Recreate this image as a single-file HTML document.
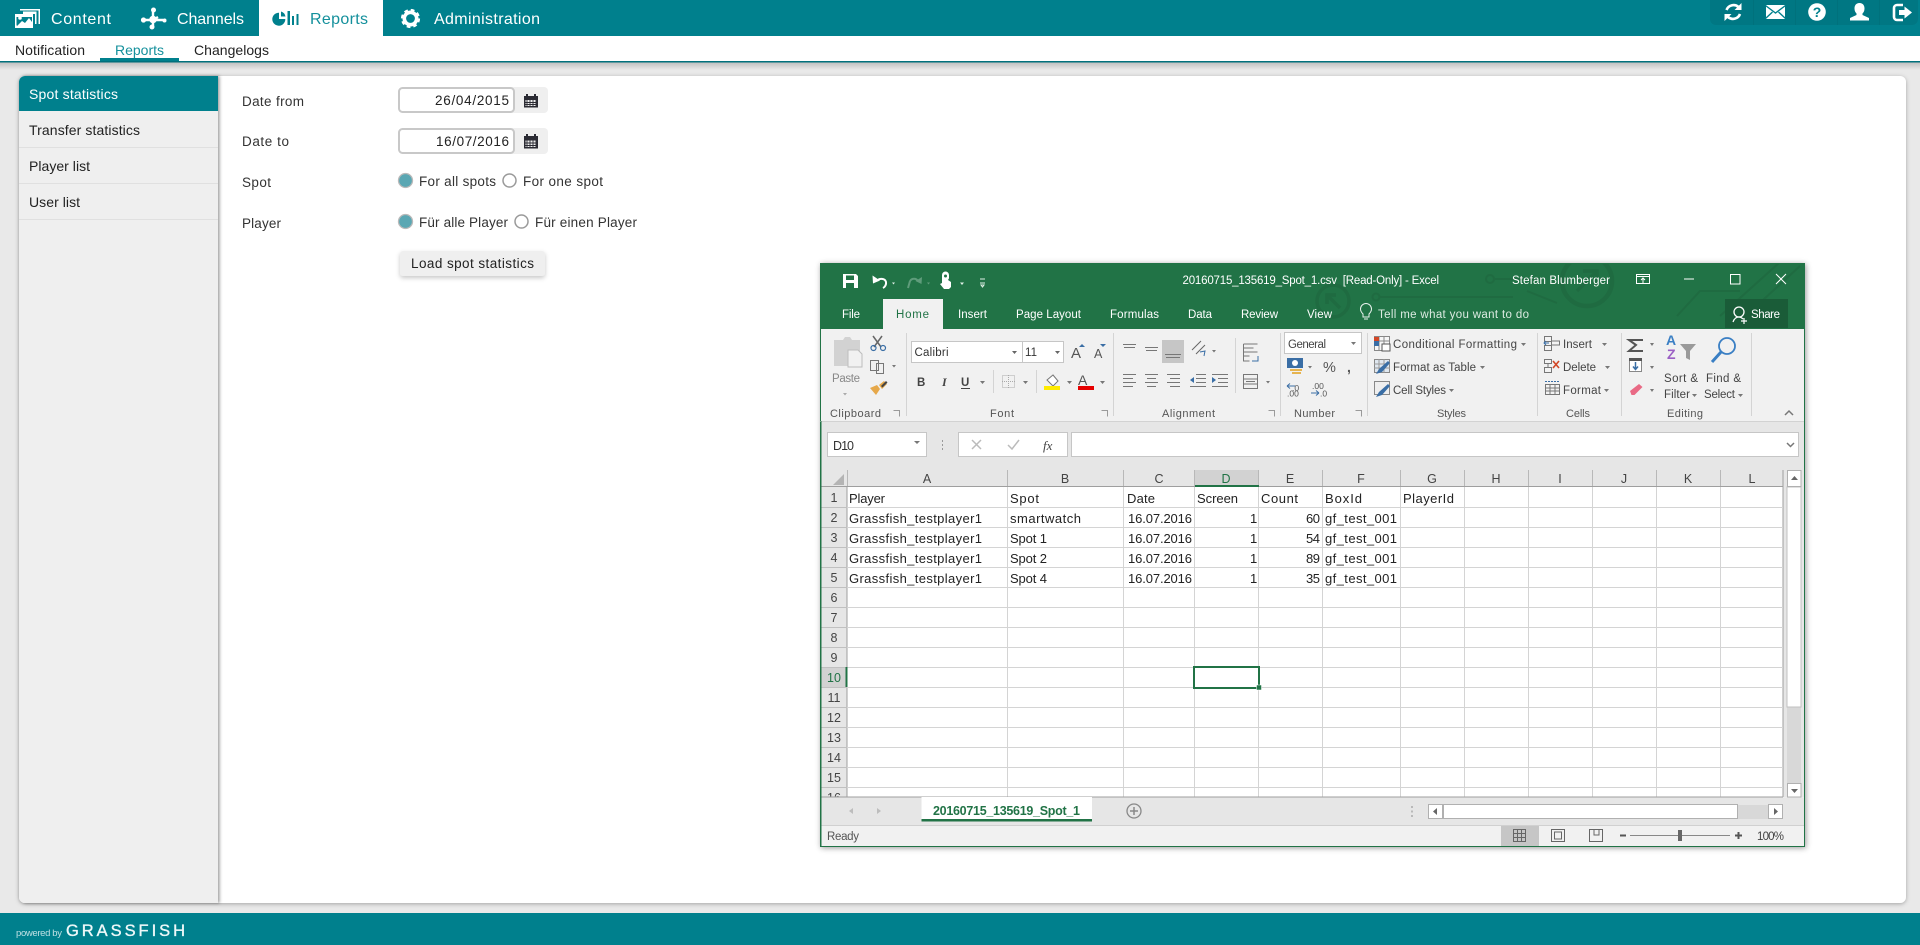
<!DOCTYPE html>
<html lang="en"><head><meta charset="utf-8"><title>Reports</title>
<style>
html,body{margin:0;padding:0;width:1920px;height:945px;overflow:hidden;background:#e9e9e9}
svg{display:block}
text{font-family:"Liberation Sans",Arial,sans-serif;white-space:pre}
.n{font-size:16px;fill:#fff}
.s{font-size:14px;fill:#222}
.f{font-size:13.5px;fill:#333}
.x{font-size:12px;fill:#444}
.t{font-size:11.5px;fill:#fff}
.g{font-size:11px;fill:#555}
.c{font-size:13px;fill:#222}
.h{font-size:12.5px;fill:#444;text-anchor:middle}
.r{font-size:12.5px;fill:#444;text-anchor:middle}
</style></head><body>
<svg width="1920" height="945" viewBox="0 0 1920 945" xmlns="http://www.w3.org/2000/svg">
<defs>
<filter id="sh" x="-5%" y="-5%" width="110%" height="110%"><feDropShadow dx="0" dy="1" stdDeviation="2" flood-color="#000" flood-opacity=".3"/></filter>
<filter id="btn" x="-10%" y="-30%" width="120%" height="170%"><feDropShadow dx="0" dy="2" stdDeviation="2.500" flood-color="#000" flood-opacity=".22"/></filter>
<filter id="shw" x="-3%" y="-3%" width="106%" height="106%"><feDropShadow dx="1" dy="1" stdDeviation="3" flood-color="#000" flood-opacity=".4"/></filter>
<filter id="sb" x="-5%" y="-2%" width="110%" height="104%"><feDropShadow dx="1.500" dy="0" stdDeviation="1.500" flood-color="#000" flood-opacity=".4"/></filter>
<linearGradient id="top" x1="0" y1="0" x2="0" y2="1"><stop offset="0" stop-color="#bdbdbd"/><stop offset="1" stop-color="#e9e9e9"/></linearGradient>
<clipPath id="tb"><rect x="820" y="263" width="985" height="66"/></clipPath>
</defs>

<rect width="1920" height="945" fill="#e9e9e9"/>
<rect x="0" y="62" width="1920" height="8" fill="url(#top)"/>

<!-- main panel -->
<rect x="19" y="76" width="1887" height="827" rx="6" fill="#fff" filter="url(#sh)"/>
<path d="M218 76H25a6 6 0 0 0-6 6V897a6 6 0 0 0 6 6H218Z" fill="#efefef" filter="url(#sb)"/>
<path d="M218 76H25a6 6 0 0 0-6 6V111H218Z" fill="#00808d"/>
<path d="M19 147.500H218M19 183.500H218M19 219.500H218" stroke="#e0e0e0"/>
<text x="29" y="99" class="s" style="fill:#fff" textLength="89">Spot statistics</text>
<text x="29" y="135" class="s" textLength="111">Transfer statistics</text>
<text x="29" y="171" class="s" textLength="61">Player list</text>
<text x="29" y="207" class="s" textLength="51">User list</text>

<!-- top nav -->
<rect width="1920" height="36" fill="#00808d"/>
<rect x="259" y="0" width="124" height="36" fill="#fff"/>
<rect x="0" y="36" width="1920" height="25" fill="#fff"/>
<rect x="0" y="61" width="1920" height="1.500" fill="#00707c"/>
<rect x="100" y="58" width="79" height="3" fill="#00808d"/>
<!-- content icon -->
<path d="M20 11.500V9h20v15h-1.500V10.500H20ZM23 14v-2.500h13.500V24H35V14Z" fill="#fff"/>
<path d="M15 14h18v14H15Z" fill="#fff"/>
<path d="M17 26l5-5 3 2 4-5 3 4v-5H16.500v8Z" fill="#00808d"/><circle cx="20" cy="18" r="1.800" fill="#fff"/>
<text x="51" y="24" class="n" textLength="60">Content</text>
<!-- channels icon -->
<path d="M153 11V27M145 20H163M153 20l5 -3" stroke="#fff" stroke-width="2.400" fill="none"/>
<circle cx="153" cy="19.500" r="3.800" fill="#fff"/><circle cx="153.500" cy="10" r="2.500" fill="#fff"/><circle cx="143.500" cy="20" r="2.600" fill="#fff"/><circle cx="164.500" cy="20.500" r="2" fill="#fff"/><circle cx="152" cy="27" r="2.500" fill="#fff"/>
<text x="177" y="24" class="n" textLength="67">Channels</text>
<!-- reports icon -->
<path d="M279 12.200v6.300h6.300a6.500 6.500 0 1 1-6.300-6.300Z" fill="#00808d" transform="translate(0 .5)"/><path d="M281 11.500a6.500 6.500 0 0 1 4.500 5H281Z" fill="#00808d"/>
<rect x="287.500" y="11" width="2.500" height="14" fill="#00808d"/><rect x="292" y="16" width="2" height="9" fill="#00808d"/><rect x="296.500" y="14" width="2" height="11" fill="#00808d"/>
<text x="310" y="24" class="n" style="fill:#14909c" textLength="58">Reports</text>
<!-- gear -->
<circle cx="410.500" cy="18.500" r="6.200" fill="none" stroke="#fff" stroke-width="3.600"/><circle cx="410.500" cy="18.500" r="8.200" fill="none" stroke="#fff" stroke-width="2.800" stroke-dasharray="3.600 2.840"/>
<text x="434" y="24" class="n" textLength="106">Administration</text>

<text x="15" y="55" class="s" textLength="70">Notification</text>
<text x="115" y="55" class="s" style="fill:#14909c" textLength="49">Reports</text>
<text x="194" y="55" class="s" textLength="75">Changelogs</text>

<!-- top right buttons -->
<path d="M1710 0H1918V19a6 6 0 0 1-6 6H1716a6 6 0 0 1-6-6Z" fill="#007783"/>
<path d="M1753.500 0V25M1795.500 0V25M1837.500 0V25M1879.500 0V25" stroke="#00717c"/>
<path d="M1726.500 10a7.500 7.500 0 0 1 12-3M1740 14a7.500 7.500 0 0 1-12 3" fill="none" stroke="#fff" stroke-width="2.600"/>
<path d="M1741.500 3v7h-7ZM1724.500 21v-7h7Z" fill="#fff"/>
<path d="M1766 5h19v14h-19Z" fill="#fff"/><path d="M1765.500 5.500l10 7.500 10-7.500M1765.500 18.500l7-6.500M1785.500 18.500l-7-6.500" fill="none" stroke="#00808d" stroke-width="1.400"/>
<circle cx="1817" cy="12" r="8.800" fill="#fff"/><text x="1817" y="17" font-size="14" font-weight="700" text-anchor="middle" fill="#00808d">?</text>
<path d="M1859.500 3c3.500 0 5 2.500 5 5.500 0 2.500-1 4-2 5v1.500l6.500 3v2.500H1850v-2.500l6.500-3V13.500c-1-1-2-2.500-2-5 0-3 1.500-5.500 5-5.500Z" fill="#fff"/>
<path d="M1903 5h-6a3 3 0 0 0-3 3v9a3 3 0 0 0 3 3h6" fill="none" stroke="#fff" stroke-width="2.600"/><path d="M1899 10h5.500V6.500l7.500 6-7.500 6V15H1899Z" fill="#fff"/>

<!-- form -->
<text x="242" y="106" class="f" textLength="62">Date from</text>
<text x="242" y="146" class="f" textLength="47">Date to</text>
<text x="242" y="187" class="f" textLength="29">Spot</text>
<text x="242" y="228" class="f" textLength="39">Player</text>
<path d="M510 87h34a4 4 0 0 1 4 4v18a4 4 0 0 1-4 4h-34Z" fill="#efefef"/>
<path d="M510 128h34a4 4 0 0 1 4 4v18a4 4 0 0 1-4 4h-34Z" fill="#efefef"/>
<rect x="399" y="88" width="115" height="24" rx="3.500" fill="#fff" stroke="#c8c8c8" stroke-width="2"/>
<rect x="399" y="129" width="115" height="24" rx="3.500" fill="#fff" stroke="#c8c8c8" stroke-width="2"/>
<text x="435" y="105" class="f" style="fill:#222" textLength="74">26/04/2015</text>
<text x="436" y="146" class="f" style="fill:#222" textLength="73">16/07/2016</text>
<g><path d="M524 96h14v11.500h-14Z" fill="#2b2b33"/><rect x="526" y="94" width="2" height="4" fill="#2b2b33"/><rect x="534" y="94" width="2" height="4" fill="#2b2b33"/><path d="M525.500 100h11v6h-11Z" fill="#efefef"/><path d="M527 100v6M530 100v6M533 100v6M536 100v6M525.500 102.500h11M525.500 104.500h11" stroke="#2b2b33" stroke-width=".9"/></g>
<g transform="translate(0 41)"><path d="M524 95h14v12.500h-14Z" fill="#2b2b33"/><rect x="526" y="93" width="2" height="4" fill="#2b2b33"/><rect x="534" y="93" width="2" height="4" fill="#2b2b33"/><path d="M525.500 99.500h11v6.500h-11Z" fill="#efefef"/><path d="M527 99.500v6.500M530 99.500v6.500M533 99.500v6.500M536 99.500v6.500M525.500 102h11M525.500 104.500h11" stroke="#2b2b33" stroke-width=".9"/></g>
<circle cx="405.500" cy="180.500" r="7" fill="#5aa7b3" stroke="#b9b9b9" stroke-width="1.300"/>
<circle cx="509.500" cy="180.500" r="6.500" fill="#fff" stroke="#9a9a9a" stroke-width="1.500"/>
<circle cx="405.500" cy="221.500" r="7" fill="#5aa7b3" stroke="#b9b9b9" stroke-width="1.300"/>
<circle cx="521.500" cy="221.500" r="6.500" fill="#fff" stroke="#9a9a9a" stroke-width="1.500"/>
<text x="419" y="186" class="f" textLength="77">For all spots</text>
<text x="523" y="186" class="f" textLength="80">For one spot</text>
<text x="419" y="227" class="f" textLength="89">Für alle Player</text>
<text x="535" y="227" class="f" textLength="102">Für einen Player</text>
<rect x="400" y="251" width="145" height="25" rx="3" fill="#efefef" filter="url(#btn)"/>
<text x="411" y="268" class="f" style="fill:#222" textLength="123">Load spot statistics</text>

<!-- footer -->
<rect y="913" width="1920" height="32" fill="#00808d"/>
<text x="16" y="936" font-size="9.500" fill="#bfe0e4" textLength="46">powered by</text>
<text x="66" y="936" font-size="16.500" fill="#eef8f9" stroke="#eef8f9" stroke-width=".35" textLength="119">GRASSFISH</text>

<!-- ================= EXCEL ================= -->
<rect x="820" y="263" width="985" height="584" fill="#f1f1f1" filter="url(#shw)"/>
<rect x="820" y="263" width="985" height="66" fill="#217346"/>
<g fill="none" stroke="#1f6b41" stroke-width="2" clip-path="url(#tb)">
<circle cx="1333" cy="301" r="16" stroke-width="3.500"/><path d="M1340 308l-13-13M1327 304v-9h9" stroke-width="3.500"/>
<circle cx="1587" cy="281" r="25" stroke-width="4.500"/><path d="M1577 291l20-20M1583 271h14v14" stroke-width="3.500"/>
<path d="M1380 297h133M1495 279h45M1527 291l30 12M1677 316l23-25h40M1763 300l37-34M1720 316l60-54"/>
<circle cx="1490" cy="279" r="4"/><circle cx="1376" cy="297" r="3.500"/>
</g>
<rect x="820.500" y="263.500" width="984" height="583" fill="none" stroke="#217346"/>
<!-- QAT -->
<path d="M843 274h13l2 2v12h-15Z" fill="#fff"/><rect x="846" y="275.500" width="8" height="4.500" fill="#217346"/><rect x="846" y="283" width="8" height="5" fill="#217346"/>
<path d="M877 281c2-3 8-3 9 1 .5 2.500-1 5-3 6" fill="none" stroke="#fff" stroke-width="2"/><path d="M872.500 275.500l.5 8 7-3Z" fill="#fff"/>
<path d="M892 282.500h3l-1.500 2Z" fill="#e0efe6"/>
<path d="M918 281c-2-3-6-3-8 0M908 288l2-7" fill="none" stroke="#5f9c7b" stroke-width="2"/><path d="M922 277l-.5 7-6-3Z" fill="#5f9c7b"/>
<path d="M927 282.500h3l-1.500 2Z" fill="#5f9c7b"/>
<path d="M942 275a3.500 3.500 0 0 1 7 0v3c0 1-1 1.500-1 2l3 2v5l-2 2h-5l-4-5 2-1Z" fill="#fff"/><circle cx="945.500" cy="276" r="1.500" fill="#217346"/>
<path d="M960 282.500h4l-2 2.500Z" fill="#e0efe6"/>
<path d="M980 279h5M980 283h5M981 285h3l-1.500 2Z" stroke="#e0efe6" fill="none" stroke-width="1"/>
<text x="1182.500" y="284" class="t" textLength="256.500">20160715_135619_Spot_1.csv  [Read-Only] - Excel</text>
<text x="1512" y="284" class="t" textLength="98">Stefan Blumberger</text>
<rect x="1636.500" y="274.500" width="13" height="9" fill="none" stroke="#fff"/><path d="M1636.500 276.500h13M1643 283v-5M1641 280l2-2 2 2" stroke="#fff" fill="none"/>
<rect x="1684" y="278.500" width="10" height="1" fill="#fff"/>
<rect x="1730.500" y="274.500" width="9.500" height="9.500" fill="none" stroke="#fff"/>
<path d="M1776 274l10 10M1786 274l-10 10" stroke="#fff" fill="none"/>
<!-- tabs -->
<rect x="883" y="299" width="60" height="30" fill="#f1f1f1"/>
<text x="842" y="318" class="t" textLength="18">File</text>
<text x="896" y="318" style="fill:#217346;font-size:11.500px" textLength="33">Home</text>
<text x="958" y="318" class="t" textLength="29">Insert</text>
<text x="1016" y="318" class="t" textLength="65">Page Layout</text>
<text x="1110" y="318" class="t" textLength="49">Formulas</text>
<text x="1188" y="318" class="t" textLength="24">Data</text>
<text x="1241" y="318" class="t" textLength="37">Review</text>
<text x="1307" y="318" class="t" textLength="25">View</text>
<text x="1378" y="318" style="fill:#dcebe2;font-size:11.500px" textLength="151">Tell me what you want to do</text>
<path d="M1363 314c-1.500-1.500-2.500-3-2.500-5a5.500 5.500 0 0 1 11 0c0 2-1 3.500-2.500 5v3h-6ZM1364 319h4" fill="none" stroke="#eaf3ee"/>
<rect x="1725" y="299" width="63" height="29" fill="#1a5c38"/>
<circle cx="1739" cy="312" r="5" fill="none" stroke="#fff" stroke-width="1.300"/><path d="M1733 322c1-3 3-5 6-5 2 0 3 1 4 2M1744 318v6M1741 321h6" fill="none" stroke="#fff" stroke-width="1.200"/>
<text x="1751" y="318" class="t" textLength="29">Share</text>

<!-- ribbon dividers -->
<path d="M906.500 333V416M1113.500 333V416M1280.500 333V416M1367.500 333V416M1537.500 333V416M1621.500 333V416M1751.500 333V416M993.500 370V393M1036.500 370V393M1235.500 338V393" stroke="#d4d4d4"/>
<path d="M820 421.500H1805" stroke="#d2d2d2"/>
<!-- ribbon labels -->
<text x="830" y="417" class="g" textLength="51">Clipboard</text>
<text x="990" y="417" class="g" textLength="24">Font</text>
<text x="1162" y="417" class="g" textLength="53">Alignment</text>
<text x="1294" y="417" class="g" textLength="41">Number</text>
<text x="1437" y="417" class="g" textLength="29">Styles</text>
<text x="1566" y="417" class="g" textLength="24">Cells</text>
<text x="1667" y="417" class="g" textLength="36">Editing</text>
<path d="M893.500 410.500h6v6M1101.500 410.500h6v6M1268.500 410.500h6v6M1355.500 410.500h6v6" fill="none" stroke="#9a9a9a"/>
<path d="M1785 415l4-4 4 4" fill="none" stroke="#777" stroke-width="1.500"/>
<!-- clipboard -->
<path d="M834 340h9l2-3h5l2 3h8v26h-26Z" fill="#d2d2d2"/><path d="M848 350h10l4 4v13h-14Z" fill="#f1f1f1" stroke="#bdbdbd"/>
<text x="832" y="382" font-size="11.500" fill="#888" textLength="28">Paste</text>
<path d="M843 393h4l-2 2.500Z" fill="#aaa"/>
<path d="M873 336l8 11M882 336l-8 11" stroke="#666" stroke-width="1.500"/><circle cx="873.500" cy="348" r="2.500" fill="none" stroke="#3a6ea5" stroke-width="1.200"/><circle cx="883" cy="348" r="2.500" fill="none" stroke="#3a6ea5" stroke-width="1.200"/>
<path d="M870.500 360.500h8v10h-8ZM876.500 363.500h7v10h-7Z" fill="#f1f1f1" stroke="#777"/>
<path d="M892 365h4l-2 2.500Z" fill="#777"/>
<path d="M870 388l7-3 3 4-4 6ZM879 385l5-4 3 3-5 5Z" fill="#e6a84a"/><path d="M881 386l5-5 1.500 1.500-5 5Z" fill="#444"/>
<!-- font -->
<rect x="911.500" y="341.500" width="152" height="21" fill="#fff" stroke="#c6c6c6"/><path d="M1022.500 341v21" stroke="#c6c6c6"/>
<text x="914.500" y="356" class="x" style="font-size:11.500px;fill:#333" textLength="34">Calibri</text>
<text x="1025" y="356" class="x" style="font-size:11.500px;fill:#333" textLength="12">11</text>
<path d="M1012 351h5l-2.500 3ZM1055 351h5l-2.500 3Z" fill="#666"/>
<text x="1071" y="358" font-size="15" fill="#555" textLength="11">A</text><path d="M1079 347l3-3 3 3Z" fill="#3a6ea5"/>
<text x="1094" y="358" font-size="12.500" fill="#555" textLength="9">A</text><path d="M1100 344h6l-3 3Z" fill="#3a6ea5"/>
<text x="917" y="386" font-size="11.500" font-weight="700" fill="#444">B</text>
<text x="942" y="386" font-size="12" font-style="italic" font-weight="700" fill="#444" style="font-family:'Liberation Serif',serif">I</text>
<text x="961" y="386" font-size="11.500" font-weight="700" fill="#444">U</text><rect x="961" y="388" width="9" height="1" fill="#444"/>
<path d="M980 381h5l-2.500 3ZM1023 381h5l-2.500 3ZM1067 381h5l-2.500 3ZM1100 381h5l-2.500 3Z" fill="#777"/>
<rect x="1002.500" y="375.500" width="12" height="12" fill="none" stroke="#aaa" stroke-dasharray="1 1"/><path d="M1008.500 375v13M1002 381.500h13" stroke="#aaa" stroke-dasharray="1 1"/>
<path d="M1047 380l6-5 5 6-5 5Z" fill="#fff" stroke="#777"/>
<rect x="1044" y="386" width="16" height="4" fill="#ffeb00"/>
<text x="1078" y="385" font-size="14" fill="#555" textLength="16">A</text><rect x="1078" y="386" width="16" height="4" fill="#e60000"/>
<!-- alignment -->
<rect x="1162" y="340" width="22" height="23" fill="#c6c6c6"/>
<path d="M1123 344.500h13M1124 347.500h11M1145 347.500h13M1146 350.500h11M1165 354.500h16M1166 357.500h14" stroke="#777"/>
<path d="M1192 350l9-9M1196 354l9-9" stroke="#666"/><path d="M1200 352l5-1-1 5" fill="none" stroke="#3a6ea5"/>
<path d="M1212 350h4l-2 2.500Z" fill="#777"/>
<path d="M1243.500 344h14M1243.500 348h10M1243.500 352h14M1243.500 356h6M1243.500 344v17h6" fill="none" stroke="#777"/><path d="M1252 361h6v-5" fill="none" stroke="#3a6ea5"/>
<path d="M1123 374.500h13M1123 378.500h10M1123 382.500h13M1123 386.500h10M1145 374.500h13M1147 378.500h9M1145 382.500h13M1147 386.500h9M1167 374.500h13M1170 378.500h10M1167 382.500h13M1170 386.500h10M1196 374.500h10M1196 378.500h10M1196 382.500h10M1190 386.500h16M1212 374.500h16M1218 378.500h10M1218 382.500h10M1212 386.500h16" stroke="#777"/>
<path d="M1190 380l4-3v6ZM1216 380l-4-3v6Z" fill="#3a6ea5"/>
<rect x="1243.500" y="374.500" width="14" height="14" fill="none" stroke="#777"/><path d="M1243.500 379h14M1243.500 384h14M1246 381.500h9" stroke="#777"/>
<path d="M1266 381h4l-2 2.500Z" fill="#777"/>
<!-- number -->
<rect x="1284.500" y="332.500" width="77" height="21" fill="#fff" stroke="#c6c6c6"/>
<text x="1288" y="348" class="x" style="font-size:11.500px;fill:#444" textLength="38">General</text>
<path d="M1351 342h5l-2.500 3Z" fill="#777"/>
<rect x="1287" y="358" width="16" height="10" fill="#3a6ea5"/><path d="M1290 370h12M1292 373h9" stroke="#e6b450" stroke-width="2"/><circle cx="1295" cy="363" r="3" fill="#fff"/>
<path d="M1308 366h4l-2 2.500Z" fill="#777"/>
<text x="1323" y="372" font-size="14.500" fill="#555" textLength="13">%</text>
<text x="1347" y="372" font-size="14" font-weight="700" fill="#555">,</text>
<path d="M1287 386h8M1287 386l3-2.500M1287 386l3 2.500M1311 393h8M1319 393l-3-2.500M1319 393l-3 2.500" stroke="#3a6ea5" fill="none"/>
<text x="1292" y="391" font-size="8.500" fill="#555">.0</text><text x="1287" y="396.500" font-size="8.500" fill="#555">.00</text>
<text x="1312" y="389" font-size="8.500" fill="#555">.00</text><text x="1320" y="396.500" font-size="8.500" fill="#555">.0</text>
<!-- styles -->
<g font-size="11.500" fill="#444">
<text x="1393" y="348" textLength="124">Conditional Formatting</text>
<text x="1393" y="371" textLength="83">Format as Table</text>
<text x="1393" y="394" textLength="53">Cell Styles</text>
<text x="1563" y="348" textLength="29">Insert</text>
<text x="1563" y="371" textLength="33">Delete</text>
<text x="1563" y="394" textLength="38">Format</text>
<text x="1664" y="382" textLength="34">Sort &amp;</text>
<text x="1664" y="398" textLength="26">Filter</text>
<text x="1706" y="382" textLength="35">Find &amp;</text>
<text x="1704" y="398" textLength="31">Select</text>
</g>
<path d="M1521 343h5l-2.500 3ZM1480 366h5l-2.500 3ZM1449 389h5l-2.500 3ZM1602 343h5l-2.500 3ZM1605 366h5l-2.500 3ZM1604 389h5l-2.500 3ZM1692 394h5l-2.500 3ZM1738 394h5l-2.500 3ZM1650 343h4l-2 3ZM1650 366h4l-2 3ZM1650 389h4l-2 3Z" fill="#777"/>
<rect x="1374.500" y="336.500" width="15" height="14" fill="#f7f7f7" stroke="#888"/><path d="M1374 341h16M1379 336v14M1384 336v14" stroke="#888"/><rect x="1374" y="337" width="5" height="4" fill="#d24726"/><rect x="1374" y="341" width="5" height="5" fill="#3a6ea5"/><rect x="1382" y="344" width="8" height="7" fill="#fff" stroke="#555"/>
<rect x="1374.500" y="359.500" width="15" height="13" fill="#dfe7ef" stroke="#888"/><path d="M1374 364h16M1374 368h16M1379 359v14M1384 359v14" stroke="#999"/><path d="M1376 374l6-2 8-9-2-2-9 8Z" fill="#3a6ea5"/>
<rect x="1374.500" y="381.500" width="15" height="13" fill="#eee" stroke="#888"/><path d="M1376 397l6-2 8-9-2-2-9 8Z" fill="#3a6ea5"/>
<!-- cells -->
<path d="M1544.500 336.500h7v5h-7ZM1544.500 345.500h7v5h-7ZM1551.500 341h8v4h-8Z" fill="#f3f3f3" stroke="#777"/><path d="M1544 343h5M1546 341l-2 2 2 2" stroke="#3a6ea5" fill="none"/>
<path d="M1544.500 359.500h7v4h-7ZM1544.500 367.500h7v5h-7ZM1548 363.500v4" fill="#f3f3f3" stroke="#777"/><path d="M1553 361l6 7M1559 361l-6 7" stroke="#d24726" stroke-width="1.600"/>
<rect x="1545.500" y="384.500" width="14" height="10" fill="#f3f3f3" stroke="#777"/><path d="M1545 388h15M1545 391h15M1550 384v11M1555 384v11" stroke="#777"/><path d="M1545 381.500h15" stroke="#3a6ea5" stroke-dasharray="2 1"/>
<!-- editing -->
<path d="M1643 340h-14l7 5-7 6h14" fill="none" stroke="#555" stroke-width="2"/>
<rect x="1629.500" y="359.500" width="12" height="12" fill="#fff" stroke="#888"/><rect x="1629" y="358" width="13" height="3" fill="#555"/><path d="M1635.500 362v7M1633 366.500l2.500 3 2.500-3" stroke="#3a6ea5" fill="none" stroke-width="1.500"/>
<path d="M1630 391l9-7 3.500 3-8 8h-3Z" fill="#e96a85"/>
<text x="1666" y="345" font-size="14" font-weight="700" fill="#3a7fc4">A</text><text x="1667" y="359" font-size="14" font-weight="700" fill="#9a5fc4">Z</text>
<path d="M1680 344h16l-6 7v9l-4-2v-7Z" fill="#9a9a9a"/>
<circle cx="1727" cy="346" r="8" fill="none" stroke="#3a7fc4" stroke-width="1.800"/><path d="M1721 352l-9 10" stroke="#3a7fc4" stroke-width="3"/>

<!-- formula bar -->
<rect x="821" y="422" width="983" height="48" fill="#e6e6e6"/>
<rect x="827.500" y="432.500" width="99" height="24" fill="#fff" stroke="#c6c6c6"/>
<text x="833" y="450" class="x" style="font-size:12.500px;fill:#333" textLength="21">D10</text>
<path d="M914 441h6l-3 3Z" fill="#777"/>
<path d="M942.500 440v2M942.500 444v2M942.500 448v2" stroke="#999"/>
<rect x="958.500" y="432.500" width="109" height="24" fill="#fff" stroke="#c6c6c6"/>
<path d="M972 440l9 9M981 440l-9 9" stroke="#bbb" stroke-width="1.500"/><path d="M1008 445l4 4 7-9" fill="none" stroke="#bbb" stroke-width="1.500"/>
<text x="1043" y="450" font-size="13" font-style="italic" style="font-family:'Liberation Serif',serif;fill:#444">fx</text>
<rect x="1071.500" y="432.500" width="727" height="24" fill="#fff" stroke="#c6c6c6"/>
<path d="M1787 443l3.500 3.500 3.500-3.500" fill="none" stroke="#777" stroke-width="1.500"/>

<!-- sheet -->
<rect x="821" y="470" width="983" height="327" fill="#e6e6e6"/>
<rect x="847" y="487" width="936" height="310" fill="#fff"/>
<path d="M833 485l11 0 0-11Z" fill="#b4b4b4"/>
<rect x="1195" y="470" width="64" height="17" fill="#d2d2d2"/>
<rect x="821" y="667" width="26" height="20" fill="#d2d2d2"/>
<!-- header dividers -->
<path d="M847.500 470V487M1007.500 470V487M1123.500 470V487M1194.500 470V487M1258.500 470V487M1322.500 470V487M1400.500 470V487M1464.500 470V487M1528.500 470V487M1592.500 470V487M1656.500 470V487M1720.500 470V487" stroke="#b8b8b8"/>
<path d="M821 486.500H1783M847 487V797M1783 470V797" stroke="#9f9f9f" fill="none"/>
<!-- grid -->
<path d="M847 507.500H1783M847 527.500H1783M847 547.500H1783M847 567.500H1783M847 587.500H1783M847 607.500H1783M847 627.500H1783M847 647.500H1783M847 667.500H1783M847 687.500H1783M847 707.500H1783M847 727.500H1783M847 747.500H1783M847 767.500H1783M847 787.500H1783M1007.500 487V797M1123.500 487V797M1194.500 487V797M1258.500 487V797M1322.500 487V797M1400.500 487V797M1464.500 487V797M1528.500 487V797M1592.500 487V797M1656.500 487V797M1720.500 487V797" stroke="#d4d4d4" fill="none"/>
<path d="M821 507.500H847M821 527.500H847M821 547.500H847M821 567.500H847M821 587.500H847M821 607.500H847M821 627.500H847M821 647.500H847M821 667.500H847M821 687.500H847M821 707.500H847M821 727.500H847M821 747.500H847M821 767.500H847M821 787.500H847" stroke="#c0c0c0"/>
<rect x="1195" y="485" width="64" height="2" fill="#217346"/>
<rect x="845.500" y="667" width="2" height="20" fill="#217346"/>
<!-- col heads -->
<text x="927" y="483" class="h">A</text><text x="1065" y="483" class="h">B</text><text x="1159" y="483" class="h">C</text><text x="1226" y="483" class="h" style="fill:#217346">D</text><text x="1290" y="483" class="h">E</text><text x="1361" y="483" class="h">F</text><text x="1432" y="483" class="h">G</text><text x="1496" y="483" class="h">H</text><text x="1560" y="483" class="h">I</text><text x="1624" y="483" class="h">J</text><text x="1688" y="483" class="h">K</text><text x="1752" y="483" class="h">L</text>
<text x="834" y="502" class="r">1</text><text x="834" y="522" class="r">2</text><text x="834" y="542" class="r">3</text><text x="834" y="562" class="r">4</text><text x="834" y="582" class="r">5</text><text x="834" y="602" class="r">6</text><text x="834" y="622" class="r">7</text><text x="834" y="642" class="r">8</text><text x="834" y="662" class="r">9</text><text x="834" y="682" class="r" style="fill:#217346">10</text><text x="834" y="702" class="r">11</text><text x="834" y="722" class="r">12</text><text x="834" y="742" class="r">13</text><text x="834" y="762" class="r">14</text><text x="834" y="782" class="r">15</text><text x="834" y="802" class="r">16</text>
<!-- cells -->
<text x="849" y="503" class="c" textLength="36">Player</text>
<text x="1010" y="503" class="c" textLength="29">Spot</text>
<text x="1127" y="503" class="c" textLength="28">Date</text>
<text x="1197" y="503" class="c" textLength="41">Screen</text>
<text x="1261" y="503" class="c" textLength="37">Count</text>
<text x="1325" y="503" class="c" textLength="37">BoxId</text>
<text x="1403" y="503" class="c" textLength="51">PlayerId</text>
<text x="849" y="523" class="c" textLength="133">Grassfish_testplayer1</text>
<text x="849" y="543" class="c" textLength="133">Grassfish_testplayer1</text>
<text x="849" y="563" class="c" textLength="133">Grassfish_testplayer1</text>
<text x="849" y="583" class="c" textLength="133">Grassfish_testplayer1</text>
<text x="1010" y="523" class="c" textLength="71">smartwatch</text>
<text x="1010" y="543" class="c" textLength="37">Spot 1</text>
<text x="1010" y="563" class="c" textLength="37">Spot 2</text>
<text x="1010" y="583" class="c" textLength="37">Spot 4</text>
<text x="1128" y="523" class="c" textLength="64">16.07.2016</text>
<text x="1128" y="543" class="c" textLength="64">16.07.2016</text>
<text x="1128" y="563" class="c" textLength="64">16.07.2016</text>
<text x="1128" y="583" class="c" textLength="64">16.07.2016</text>
<text x="1250" y="523" class="c">1</text><text x="1250" y="543" class="c">1</text><text x="1250" y="563" class="c">1</text><text x="1250" y="583" class="c">1</text>
<text x="1306" y="523" class="c" textLength="14">60</text><text x="1306" y="543" class="c" textLength="14">54</text><text x="1306" y="563" class="c" textLength="14">89</text><text x="1306" y="583" class="c" textLength="14">35</text>
<text x="1325" y="523" class="c" textLength="72">gf_test_001</text>
<text x="1325" y="543" class="c" textLength="72">gf_test_001</text>
<text x="1325" y="563" class="c" textLength="72">gf_test_001</text>
<text x="1325" y="583" class="c" textLength="72">gf_test_001</text>
<!-- selection -->
<rect x="1194" y="667" width="65" height="21" fill="none" stroke="#217346" stroke-width="2"/>
<rect x="1256.500" y="685" width="5" height="5" fill="#217346" stroke="#fff" stroke-width=".5"/>
<!-- v scrollbar -->
<rect x="1787" y="470" width="14" height="327" fill="#d8d8d8"/>
<rect x="1787" y="487" width="14" height="220" fill="#fff" stroke="#c0c0c0"/>
<rect x="1787.500" y="470.500" width="13.500" height="16" fill="#fff" stroke="#b0b0b0"/>
<rect x="1787.500" y="783.500" width="13.500" height="13.500" fill="#fff" stroke="#b0b0b0"/>
<path d="M1791 480l3.500-4 3.500 4ZM1791 789h7l-3.500 4Z" fill="#666"/>
<!-- tab bar -->
<rect x="821" y="797.500" width="983" height="27.500" fill="#e6e6e6"/>
<rect x="821" y="796.500" width="962" height="1" fill="#9f9f9f"/>
<rect x="921.500" y="797" width="170.500" height="22" fill="#fff"/>
<rect x="921.500" y="819" width="170.500" height="2.500" fill="#217346"/>
<text x="933" y="815" font-size="12.500" font-weight="700" fill="#217346" textLength="147">20160715_135619_Spot_1</text>
<path d="M853 808v6l-4-3ZM877 808v6l4-3Z" fill="#bdbdbd"/>
<circle cx="1134" cy="811" r="7" fill="none" stroke="#888" stroke-width="1.300"/><path d="M1130 811h8M1134 807v8" stroke="#888" stroke-width="1.500"/>
<path d="M1412 806v2M1412 810.500v2M1412 815v2" stroke="#aaa" stroke-width="1.500"/>
<rect x="1428.500" y="804.500" width="14" height="14" fill="#fff" stroke="#b0b0b0"/>
<rect x="1443.500" y="804.500" width="294" height="14" fill="#fff" stroke="#b0b0b0"/>
<rect x="1738" y="805" width="30" height="14" fill="#d8d8d8"/>
<rect x="1768.500" y="804.500" width="14" height="14" fill="#fff" stroke="#b0b0b0"/>
<path d="M1437 808v7l-4-3.500ZM1774 808v7l4-3.500Z" fill="#666"/>
<!-- status bar -->
<rect x="821" y="825" width="983" height="21" fill="#f1f1f1"/>
<path d="M821 825.500H1804" stroke="#d0d0d0"/>
<text x="827" y="840" class="g" style="font-size:11.500px" textLength="32">Ready</text>
<rect x="1501" y="826" width="38" height="20" fill="#c6c6c6"/>
<rect x="1513.500" y="829.500" width="12" height="12" fill="none" stroke="#666"/><path d="M1517.500 830v11M1521.500 830v11M1514 833.500h11M1514 837.500h11" stroke="#666"/>
<rect x="1551.500" y="829.500" width="13" height="12" fill="none" stroke="#666"/><rect x="1554.500" y="832" width="7" height="7" fill="none" stroke="#666"/>
<rect x="1589.500" y="829.500" width="13" height="12" fill="none" stroke="#666"/><path d="M1594 830v5h5v-5" fill="none" stroke="#666"/>
<path d="M1620 835.500h6" stroke="#555" stroke-width="2"/>
<path d="M1630 835.500H1730" stroke="#888"/>
<rect x="1678" y="830" width="4" height="11" fill="#666"/>
<path d="M1735 835.500h7M1738.500 832v7" stroke="#555" stroke-width="2"/>
<text x="1757" y="840" class="x" style="font-size:11.500px" textLength="27">100%</text>
<rect x="820.500" y="421" width="1" height="426" fill="#217346"/>
<rect x="1804" y="329" width="1" height="518" fill="#217346"/>
<rect x="820" y="846" width="985" height="1" fill="#217346"/>
</svg>
</body></html>
